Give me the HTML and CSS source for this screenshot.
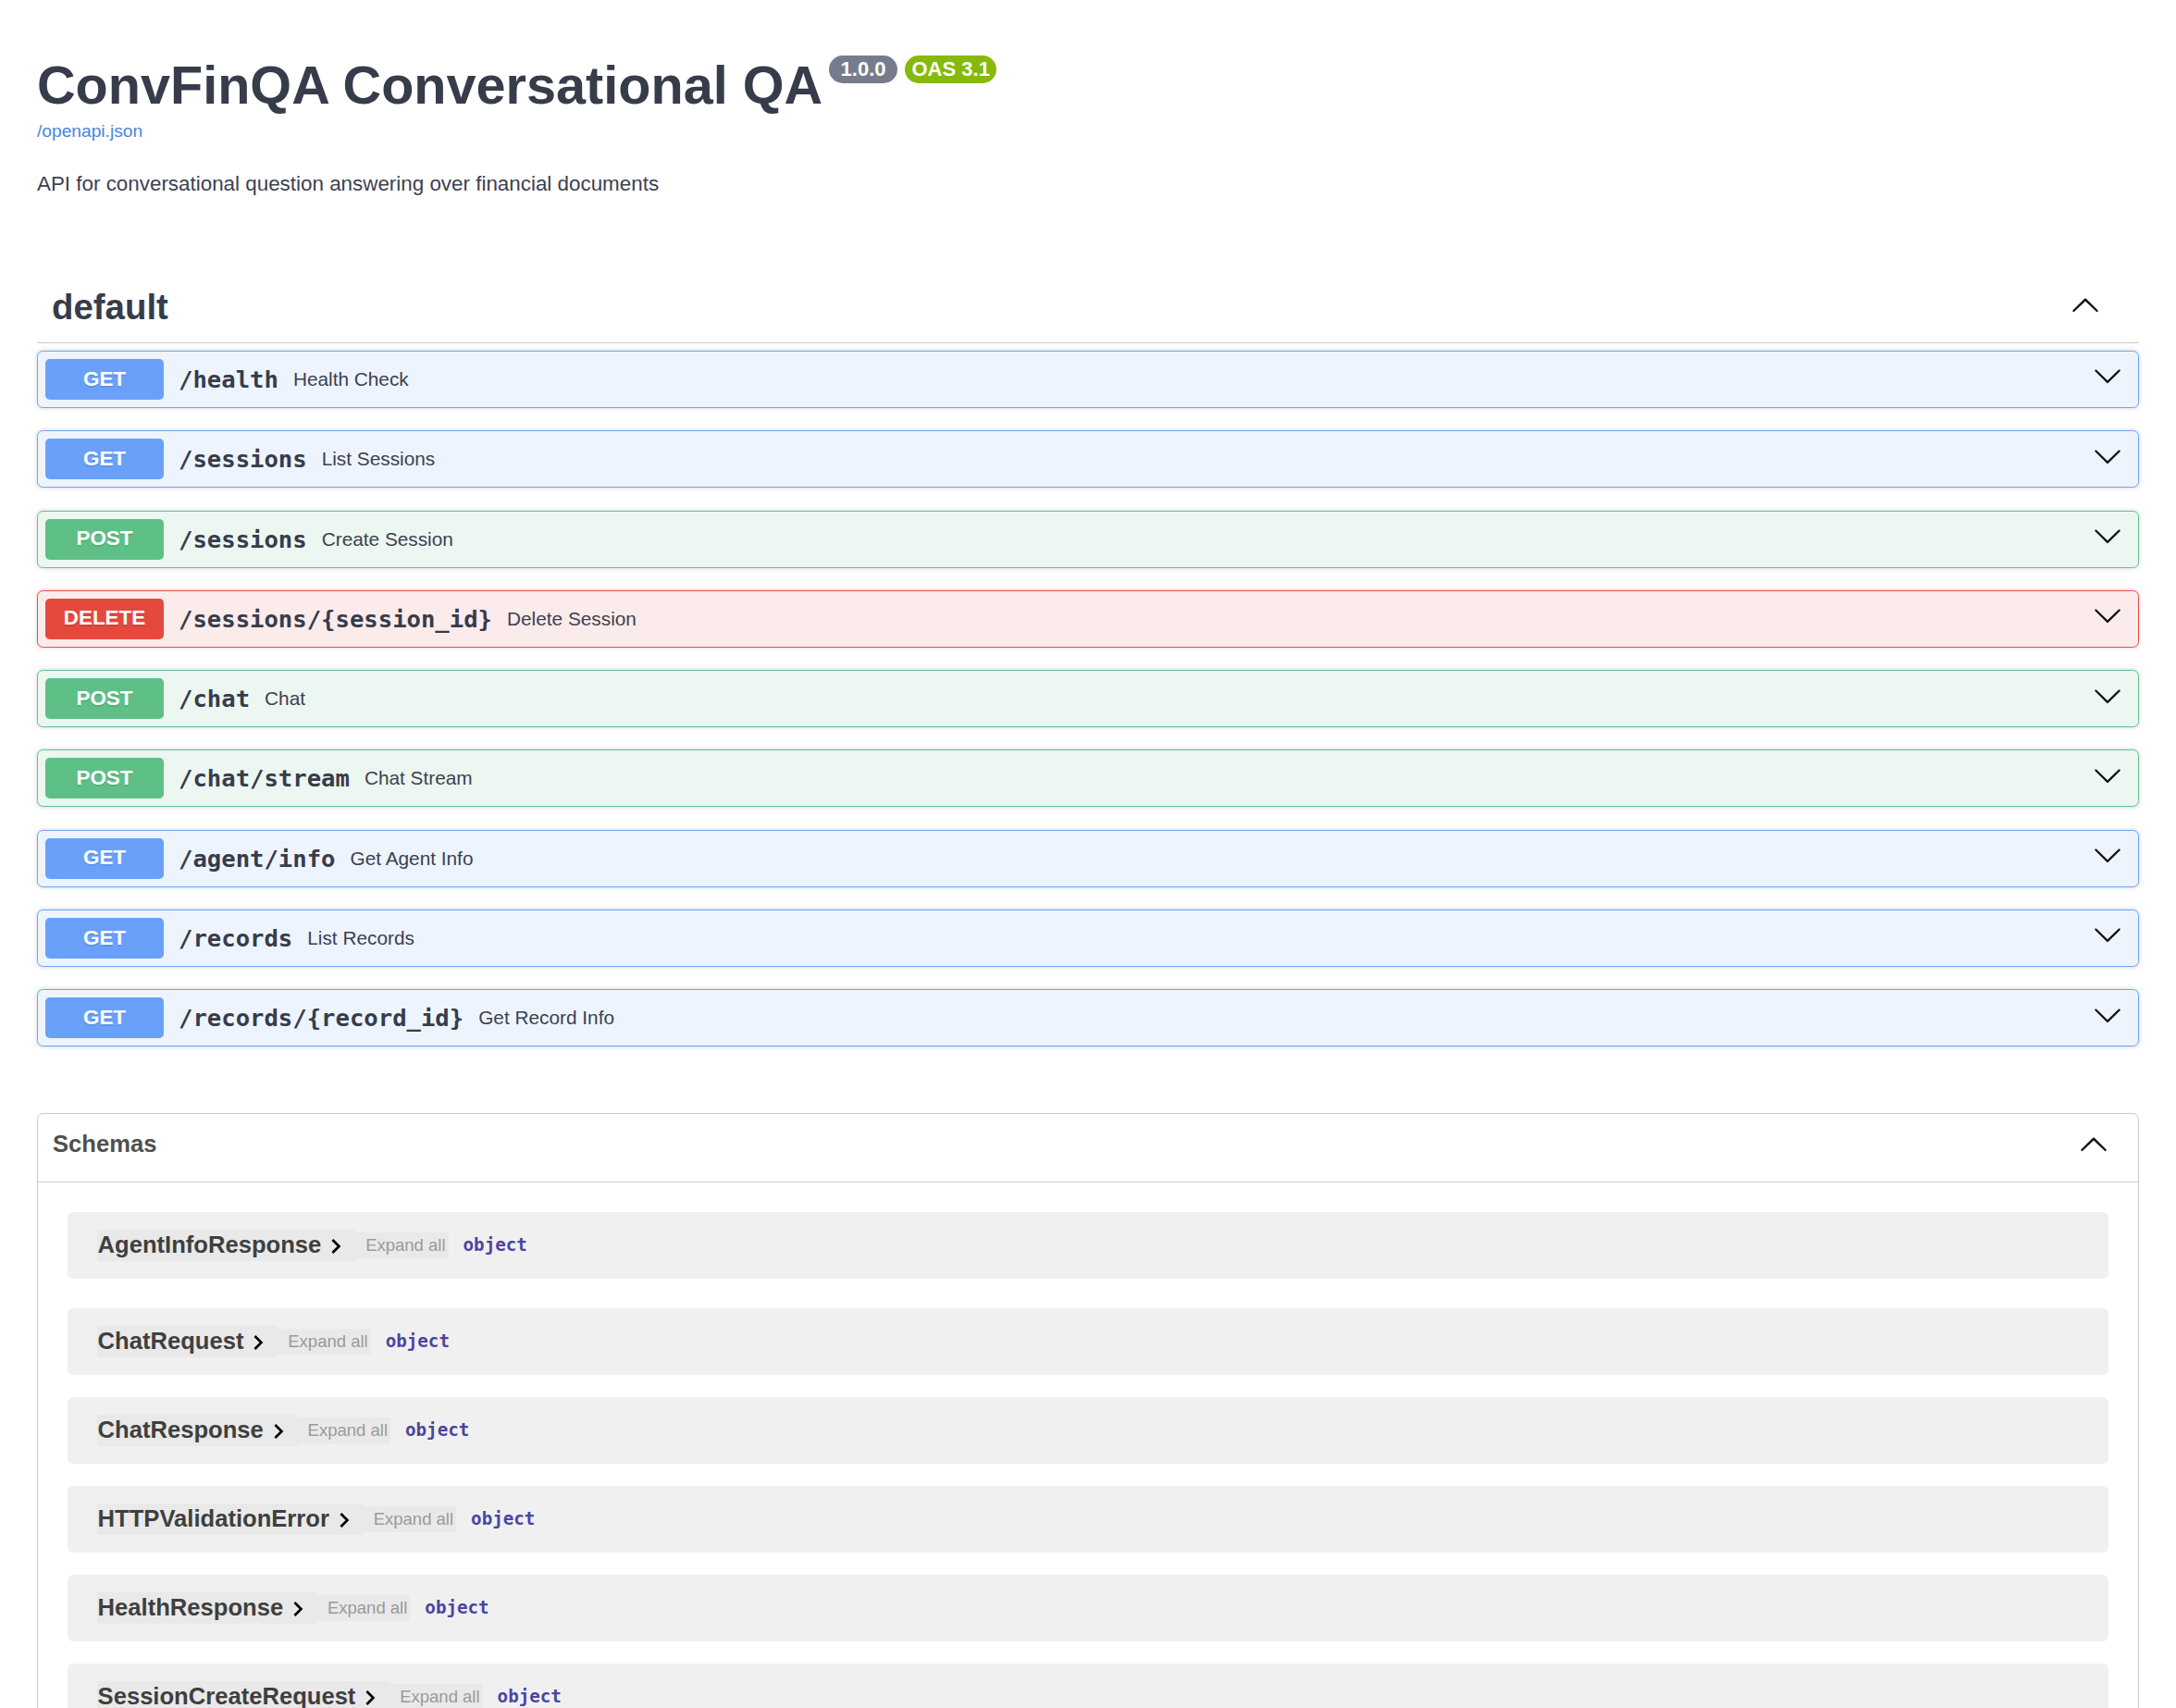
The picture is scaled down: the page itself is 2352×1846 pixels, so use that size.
FILE: index.html
```html
<!DOCTYPE html>
<html lang="en">
<head>
<meta charset="utf-8">
<title>ConvFinQA Conversational QA - Swagger UI</title>
<link rel="stylesheet" href="styles.css">
</head>
<body>
<div class="page">
  <header class="info">
    <div class="title-row">
      <h2 class="title">ConvFinQA Conversational QA</h2>
      <span class="badge badge-version">1.0.0</span>
      <span class="badge badge-oas">OAS 3.1</span>
    </div>
    <a class="spec-link" href="#">/openapi.json</a>
    <p class="description">API for conversational question answering over financial documents</p>
  </header>

  <section class="tag-section">
    <h3 class="tag">
      <span class="tag-name">default</span>
      <svg class="tag-arrow" viewBox="0 0 20 20"><path d="M17.418 14.908c.272.268.709.268.979 0s.271-.701 0-.969l-7.908-7.83c-.27-.268-.707-.268-.979 0l-7.908 7.83c-.27.268-.27.701 0 .969.271.268.709.268.979 0L10 7.767l7.418 7.141z"/></svg>
    </h3>
    <div class="opblocks">
      <div class="opblock get"><div class="summary"><span class="method">GET</span><span class="path">/health</span><span class="summary-desc">Health Check</span><svg class="arrow" viewBox="0 0 20 20"><path d="M17.418 6.109c.272-.268.709-.268.979 0s.271.701 0 .969l-7.908 7.83c-.27.268-.707.268-.979 0l-7.908-7.83c-.27-.268-.27-.701 0-.969.271-.268.709-.268.979 0L10 13.25l7.418-7.141z"/></svg></div></div>
      <div class="opblock get"><div class="summary"><span class="method">GET</span><span class="path">/sessions</span><span class="summary-desc">List Sessions</span><svg class="arrow" viewBox="0 0 20 20"><path d="M17.418 6.109c.272-.268.709-.268.979 0s.271.701 0 .969l-7.908 7.83c-.27.268-.707.268-.979 0l-7.908-7.83c-.27-.268-.27-.701 0-.969.271-.268.709-.268.979 0L10 13.25l7.418-7.141z"/></svg></div></div>
      <div class="opblock post"><div class="summary"><span class="method">POST</span><span class="path">/sessions</span><span class="summary-desc">Create Session</span><svg class="arrow" viewBox="0 0 20 20"><path d="M17.418 6.109c.272-.268.709-.268.979 0s.271.701 0 .969l-7.908 7.83c-.27.268-.707.268-.979 0l-7.908-7.83c-.27-.268-.27-.701 0-.969.271-.268.709-.268.979 0L10 13.25l7.418-7.141z"/></svg></div></div>
      <div class="opblock delete"><div class="summary"><span class="method">DELETE</span><span class="path">/sessions/{session_id}</span><span class="summary-desc">Delete Session</span><svg class="arrow" viewBox="0 0 20 20"><path d="M17.418 6.109c.272-.268.709-.268.979 0s.271.701 0 .969l-7.908 7.83c-.27.268-.707.268-.979 0l-7.908-7.83c-.27-.268-.27-.701 0-.969.271-.268.709-.268.979 0L10 13.25l7.418-7.141z"/></svg></div></div>
      <div class="opblock post"><div class="summary"><span class="method">POST</span><span class="path">/chat</span><span class="summary-desc">Chat</span><svg class="arrow" viewBox="0 0 20 20"><path d="M17.418 6.109c.272-.268.709-.268.979 0s.271.701 0 .969l-7.908 7.83c-.27.268-.707.268-.979 0l-7.908-7.83c-.27-.268-.27-.701 0-.969.271-.268.709-.268.979 0L10 13.25l7.418-7.141z"/></svg></div></div>
      <div class="opblock post"><div class="summary"><span class="method">POST</span><span class="path">/chat/stream</span><span class="summary-desc">Chat Stream</span><svg class="arrow" viewBox="0 0 20 20"><path d="M17.418 6.109c.272-.268.709-.268.979 0s.271.701 0 .969l-7.908 7.83c-.27.268-.707.268-.979 0l-7.908-7.83c-.27-.268-.27-.701 0-.969.271-.268.709-.268.979 0L10 13.25l7.418-7.141z"/></svg></div></div>
      <div class="opblock get"><div class="summary"><span class="method">GET</span><span class="path">/agent/info</span><span class="summary-desc">Get Agent Info</span><svg class="arrow" viewBox="0 0 20 20"><path d="M17.418 6.109c.272-.268.709-.268.979 0s.271.701 0 .969l-7.908 7.83c-.27.268-.707.268-.979 0l-7.908-7.83c-.27-.268-.27-.701 0-.969.271-.268.709-.268.979 0L10 13.25l7.418-7.141z"/></svg></div></div>
      <div class="opblock get"><div class="summary"><span class="method">GET</span><span class="path">/records</span><span class="summary-desc">List Records</span><svg class="arrow" viewBox="0 0 20 20"><path d="M17.418 6.109c.272-.268.709-.268.979 0s.271.701 0 .969l-7.908 7.83c-.27.268-.707.268-.979 0l-7.908-7.83c-.27-.268-.27-.701 0-.969.271-.268.709-.268.979 0L10 13.25l7.418-7.141z"/></svg></div></div>
      <div class="opblock get"><div class="summary"><span class="method">GET</span><span class="path">/records/{record_id}</span><span class="summary-desc">Get Record Info</span><svg class="arrow" viewBox="0 0 20 20"><path d="M17.418 6.109c.272-.268.709-.268.979 0s.271.701 0 .969l-7.908 7.83c-.27.268-.707.268-.979 0l-7.908-7.83c-.27-.268-.27-.701 0-.969.271-.268.709-.268.979 0L10 13.25l7.418-7.141z"/></svg></div></div>
    </div>
  </section>

  <section class="models">
    <h4 class="models-header">
      <span>Schemas</span>
      <svg class="models-arrow" viewBox="0 0 20 20"><path d="M17.418 14.908c.272.268.709.268.979 0s.271-.701 0-.969l-7.908-7.83c-.27-.268-.707-.268-.979 0l-7.908 7.83c-.27.268-.27.701 0 .969.271.268.709.268.979 0L10 7.767l7.418 7.141z"/></svg>
    </h4>
    <div class="models-list">
      <div class="model"><span class="model-name-box"><span class="model-name">AgentInfoResponse</span><svg class="model-toggle" viewBox="0 0 24 24"><path d="M10 6L8.59 7.41 13.17 12l-4.58 4.59L10 18l6-6z"/></svg></span><span class="expand">Expand all</span><span class="type">object</span></div>
      <div class="model"><span class="model-name-box"><span class="model-name">ChatRequest</span><svg class="model-toggle" viewBox="0 0 24 24"><path d="M10 6L8.59 7.41 13.17 12l-4.58 4.59L10 18l6-6z"/></svg></span><span class="expand">Expand all</span><span class="type">object</span></div>
      <div class="model"><span class="model-name-box"><span class="model-name">ChatResponse</span><svg class="model-toggle" viewBox="0 0 24 24"><path d="M10 6L8.59 7.41 13.17 12l-4.58 4.59L10 18l6-6z"/></svg></span><span class="expand">Expand all</span><span class="type">object</span></div>
      <div class="model"><span class="model-name-box"><span class="model-name">HTTPValidationError</span><svg class="model-toggle" viewBox="0 0 24 24"><path d="M10 6L8.59 7.41 13.17 12l-4.58 4.59L10 18l6-6z"/></svg></span><span class="expand">Expand all</span><span class="type">object</span></div>
      <div class="model"><span class="model-name-box"><span class="model-name">HealthResponse</span><svg class="model-toggle" viewBox="0 0 24 24"><path d="M10 6L8.59 7.41 13.17 12l-4.58 4.59L10 18l6-6z"/></svg></span><span class="expand">Expand all</span><span class="type">object</span></div>
      <div class="model"><span class="model-name-box"><span class="model-name">SessionCreateRequest</span><svg class="model-toggle" viewBox="0 0 24 24"><path d="M10 6L8.59 7.41 13.17 12l-4.58 4.59L10 18l6-6z"/></svg></span><span class="expand">Expand all</span><span class="type">object</span></div>
    </div>
  </section>
</div>
</body>
</html>
```

FILE: styles.css
```css
html, body {
  margin: 0;
  padding: 0;
  background: #ffffff;
}

body {
  font-family: "Liberation Sans", Arial, Helvetica, sans-serif;
  color: #3b4151;
}

.page {
  padding: 0 40px;
}

/* ---------- Info ---------- */
.info {
  padding-top: 59px;
}

.title-row {
  display: flex;
  align-items: flex-start;
}

.title {
  margin: 0;
  font-size: 57.6px;
  line-height: 66px;
  font-weight: 700;
  color: #373c4b;
}

.badge {
  margin-top: 1px;
  margin-left: 8px;
  height: 30px;
  line-height: 30px;
  border-radius: 15px;
  font-size: 22px;
  font-weight: 700;
  color: #ffffff;
  white-space: nowrap;
}

.badge-version {
  margin-left: 7px;
  padding: 0 12.5px;
  background: #767c8b;
}

.badge-oas {
  padding: 0 7.5px;
  background: #86b90a;
}

.spec-link {
  display: inline-block;
  margin-top: 5.6px;
  font-size: 19.2px;
  line-height: 22px;
  color: #4686e0;
  text-decoration: none;
}

.description {
  margin: 33.5px 0 0;
  font-size: 22.4px;
  line-height: 26px;
  color: #3b4151;
}

/* ---------- Tag section ---------- */
.tag {
  display: flex;
  align-items: center;
  margin: 79.9px 0 8px;
  padding: 16px 32px 14px 16px;
  border-bottom: 1px solid #c9cacf;
  font-size: 38.4px;
  line-height: 48px;
  font-weight: 700;
  color: #373c4b;
}

.tag-name {
  flex: 1 1 auto;
}

.tag-arrow {
  width: 32px;
  height: 32px;
  margin: 0 10.4px 6px 0;
  fill: #111111;
}

.opblocks {
  display: flex;
  flex-direction: column;
  gap: 24.3px;
}

.opblock {
  border: 1px solid #000;
  border-radius: 6.4px;
  box-shadow: 0 0 4.8px rgba(0, 0, 0, 0.19);
}

.opblock.get {
  background: #eef4fe;
  border-color: #70a5f3;
}

.opblock.get .method {
  background: #69a1fa;
}

.opblock.post {
  background: #edf7f1;
  border-color: #63c38c;
}

.opblock.post .method {
  background: #5ec087;
}

.opblock.delete {
  background: #fcebeb;
  border-color: #e8514a;
}

.opblock.delete .method {
  background: #e5493e;
}

.summary {
  display: flex;
  align-items: center;
  padding: 8px;
}

.method {
  min-width: 128px;
  padding: 9.6px 0;
  line-height: 24.8px;
  border-radius: 4.8px;
  font-size: 22.4px;
  font-weight: 700;
  text-align: center;
  color: #ffffff;
  text-shadow: 0 1.6px 0 rgba(0, 0, 0, 0.1);
}

.path {
  padding: 0 16px;
  font-family: "DejaVu Sans Mono", Menlo, monospace;
  font-weight: 700;
  font-size: 25.6px;
  color: #373c4b;
  white-space: nowrap;
}

.summary-desc {
  flex: 1 1 auto;
  font-size: 20.8px;
  color: #3b4151;
}

.arrow {
  width: 32px;
  height: 32px;
  margin: 0 9px 7px 0;
  fill: #111111;
}

/* ---------- Schemas ---------- */
.models {
  margin-top: 72px;
  border: 1px solid #c9cacf;
  border-radius: 6.4px;
}

.models-header {
  display: flex;
  align-items: center;
  justify-content: space-between;
  margin: 0;
  padding: 12px 32px 20px 16px;
  border-bottom: 1px solid #c9cacf;
  font-size: 25.6px;
  line-height: 40.4px;
  font-weight: 700;
  color: #505050;
}

.models-arrow {
  width: 32px;
  height: 32px;
  fill: #111111;
}

.models-list {
  padding: 32px 32px 8px;
}

.model {
  display: flex;
  align-items: center;
  height: 72px;
  margin-bottom: 24px;
  padding-left: 31.6px;
  border-radius: 6.4px;
  background: #f0f0f0;
}

.model:first-child {
  margin-bottom: 32px;
}

.model-name-box {
  display: flex;
  align-items: center;
  height: 34px;
  padding-left: 1px;
  background: #e9e9e9;
}

.model-name {
  font-size: 25.6px;
  font-weight: 700;
  color: #3f3f3f;
}

.model-toggle {
  width: 32px;
  height: 32px;
  margin: 3px 4.8px 0 0;
  fill: #000000;
}

.expand {
  display: flex;
  align-items: center;
  height: 28px;
  padding: 0 3px 0 11px;
  background: #e9e9e9;
  font-size: 18.5px;
  color: #9a9a9a;
}

.type {
  margin-left: 16px;
  font-family: "DejaVu Sans Mono", Menlo, monospace;
  font-weight: 700;
  font-size: 19.2px;
  color: #4b45a0;
}
```
